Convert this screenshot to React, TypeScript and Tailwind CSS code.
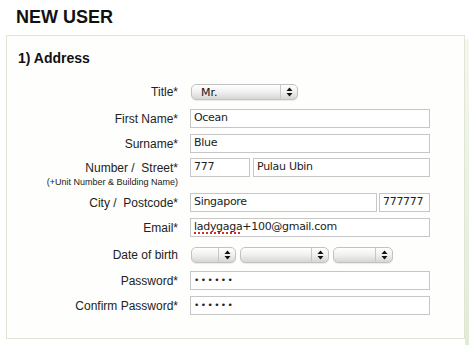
import React from "react";

const Arrows = () => (
  <svg width="7" height="10" viewBox="0 0 7 10">
    <path d="M3.5 0.5 L6.5 4 L0.5 4 Z" fill="#111" />
    <path d="M3.5 9.5 L6.5 6 L0.5 6 Z" fill="#111" />
  </svg>
);

const Select = ({ w, value }: { w: string; value?: string }) => (
  <div
    className={`${w} h-[16px] flex rounded-[5px] border border-[#c2c2c2] bg-gradient-to-b from-white via-[#f0f0f0] to-[#d6d6d6] shadow-[0_1px_1px_rgba(0,0,0,0.08)]`}
  >
    <div className="flex-1 pl-[9px] pt-[1px] flex items-center text-[11px] leading-[12px] text-[#111] font-['DejaVu_Sans',sans-serif]">
      {value}
    </div>
    <div className="w-[17px] border-l border-[#c8c8c8] flex items-center justify-center">
      <Arrows />
    </div>
  </div>
);

const Box = ({ w, children }: { w: string; children?: React.ReactNode }) => (
  <div
    className={`${w} h-[19px] border border-[#c6c6c6] bg-white pl-[3px] flex items-center text-[11px] tracking-[-0.3px] text-[#222] font-['DejaVu_Sans',sans-serif] whitespace-nowrap overflow-hidden`}
  >
    {children}
  </div>
);

const Row = ({
  label,
  mt,
  h = "h-[19px]",
  children,
}: {
  label: string;
  mt: string;
  h?: string;
  children: React.ReactNode;
}) => (
  <div className={`flex ${mt}`}>
    <div className={`w-[171px] ${h} flex items-center justify-end text-[12px] text-[#222]`}>{label}</div>
    <div className="ml-[12px] flex">{children}</div>
  </div>
);

const Dots = () => <span className="text-[9px] tracking-[1.4px]">••••••</span>;

export default function App() {
  return (
    <div className="w-[469px] h-[345px] bg-white overflow-hidden font-['Liberation_Sans',Arial,sans-serif]">
      <h1 className="pl-[16px] pt-[7px] text-[18px] font-bold leading-[20px] text-[#111]">NEW USER</h1>

      <div className="flex mt-[8px]">
        <div className="ml-[6px] w-[460px] h-[304px] border border-[#e3e3d6] bg-[#fefefc]">
          <h2 className="pl-[11px] pt-[14px] text-[14px] font-bold leading-[16px] text-[#111]">1) Address</h2>

          <Row label="Title*" mt="mt-[18px]" h="h-[16px]">
            <div className="ml-[1px]">
              <Select w="w-[107px]" value="Mr." />
            </div>
          </Row>

          <Row label="First Name*" mt="mt-[9px]">
            <Box w="w-[240px]">Ocean</Box>
          </Row>

          <Row label="Surname*" mt="mt-[6px]">
            <Box w="w-[240px]">Blue</Box>
          </Row>

          <div className="flex mt-[5px]">
            <div className="w-[171px] flex flex-col items-end">
              <div className="h-[19px] flex items-center text-[12px] text-[#222]">Number / &nbsp;Street*</div>
              <div className="text-[9px] leading-[11px] text-[#222]">(+Unit Number &amp; Building Name)</div>
            </div>
            <div className="ml-[12px] flex items-start">
              <Box w="w-[60px]">777</Box>
              <div className="ml-[3px]">
                <Box w="w-[177px]">Pulau Ubin</Box>
              </div>
            </div>
          </div>

          <Row label="City / &nbsp;Postcode*" mt="mt-[5px]">
            <Box w="w-[187px]">Singapore</Box>
            <div className="ml-[2px]">
              <Box w="w-[51px]">777777</Box>
            </div>
          </Row>

          <Row label="Email*" mt="mt-[6px]">
            <Box w="w-[240px]">
              <span className="underline decoration-dotted decoration-[#d0302a] decoration-[1.5px] underline-offset-[2px]">
                ladygaga
              </span>
              +100@gmail.com
            </Box>
          </Row>

          <Row label="Date of birth" mt="mt-[10px]" h="h-[16px]">
            <div className="ml-[1px] flex gap-[4px]">
              <Select w="w-[45px]" />
              <Select w="w-[89px]" />
              <Select w="w-[60px]" />
            </div>
          </Row>

          <Row label="Password*" mt="mt-[8px]">
            <Box w="w-[240px]">
              <Dots />
            </Box>
          </Row>

          <Row label="Confirm Password*" mt="mt-[6px]">
            <Box w="w-[240px]">
              <Dots />
            </Box>
          </Row>
        </div>
        <div className="mt-[4px] w-[4px] h-[310px] rounded-t-[3px] bg-gradient-to-b from-[#f3f8ee] to-[#dfedd2]" />
      </div>
    </div>
  );
}
